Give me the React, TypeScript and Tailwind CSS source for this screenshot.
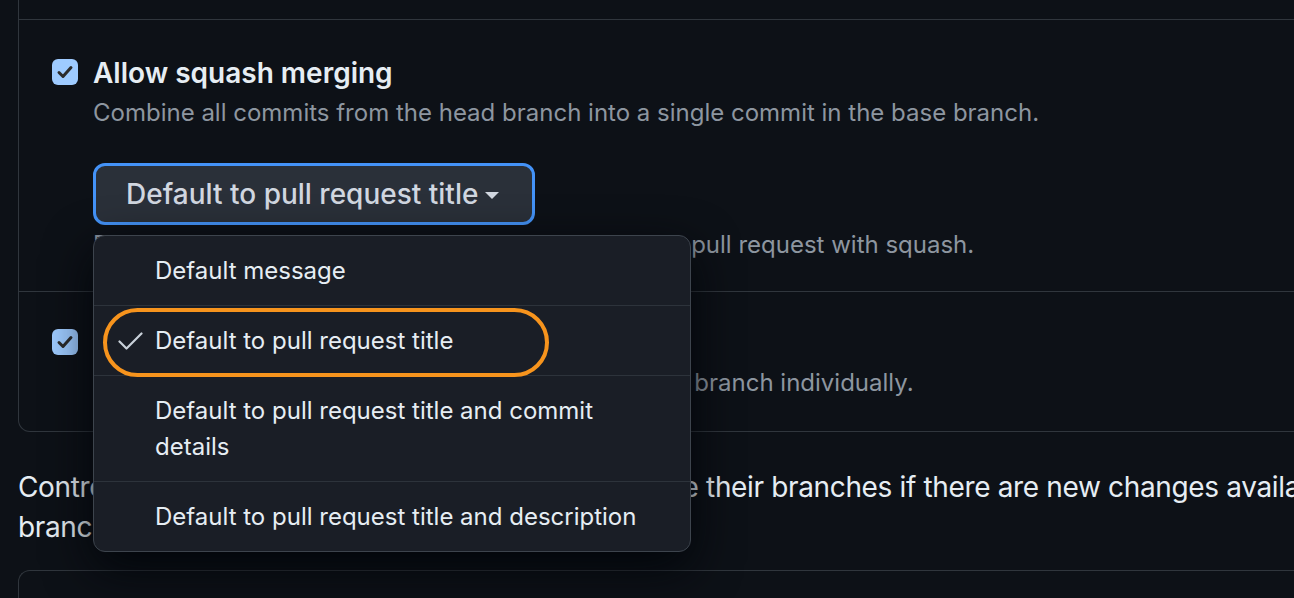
import React from "react";

function CheckBox() {
  return (
    <div className="w-[26px] h-[26px] shrink-0 rounded-[6px] bg-[#9ecbff] flex items-center justify-center">
      <svg width="18" height="18" viewBox="0 0 18 18">
        <path d="M3 9.5 L7 13.5 L15 4.5" fill="none" stroke="#2b2b2b" strokeWidth="3" strokeLinecap="round" strokeLinejoin="round" />
      </svg>
    </div>
  );
}

function MenuItem({ children, checked, last }: { children: React.ReactNode; checked?: boolean; last?: boolean }) {
  return (
    <div className={"flex pl-[24px] pr-[32px] pt-[17px] pb-[16px] " + (last ? "" : "border-b border-[#2d333b]")}>
      <div className="w-[37px] shrink-0 h-[36px] flex items-center">
        {checked && (
          <svg width="25" height="20" viewBox="0 0 25 20">
            <path d="M1.5 10.5 L8.5 17.5 L23.5 2.5" fill="none" stroke="#c9d1d9" strokeWidth="2.2" strokeLinecap="round" strokeLinejoin="round" />
          </svg>
        )}
      </div>
      <div className="text-[24px] leading-[36px] text-[#e6edf3]">{children}</div>
    </div>
  );
}

export default function App() {
  return (
    <div
      className="w-[1294px] h-[598px] overflow-hidden bg-[#0d1117] relative"
      style={{ fontFamily: 'Inter, "Noto Sans", "Liberation Sans", sans-serif' }}
    >
      <div className="pl-[18px]">
        <div className="w-[1400px] border-x border-b border-[#30363d] rounded-b-[12px]">
          <div className="h-[20px] border-b border-[#30363d]" />
          <div className="pl-[33px] pt-[32px] pb-[28px] border-b border-[#30363d] flex gap-[15px]">
            <div className="pt-[7px]">
              <CheckBox />
            </div>
            <div>
              <div className="pt-[1px] text-[28px] leading-[40px] font-semibold text-[#e6edf3]">Allow squash merging</div>
              <div className="mt-[2px] text-[24px] leading-[36px] text-[#8d96a0]">
                Combine all commits from the head branch into a single commit in the base branch.
              </div>
              <div className="relative mt-[32px] inline-block">
                <div className="h-[62px] flex items-center gap-[7px] pl-[30px] pr-[33px] rounded-[12px] border-[3px] border-[#4493f8] bg-[#2a3039]">
                  <span className="text-[28px] leading-[40px] font-medium text-[#d1d7e0]">Default to pull request title</span>
                  <svg width="14" height="8" viewBox="0 0 14 8" className="mt-[3px]">
                    <path d="M0 0 L14 0 L7 7 Z" fill="#d1d7e0" />
                  </svg>
                </div>
                <div className="absolute left-0 top-[72px] z-10 w-[598px] rounded-[12px] border border-[#3d444d] bg-[#1a1e26] shadow-[0_16px_48px_rgba(1,4,9,0.9)]">
                  <MenuItem>Default message</MenuItem>
                  <MenuItem checked>Default to pull request title</MenuItem>
                  <MenuItem>Default to pull request title and commit details</MenuItem>
                  <MenuItem last>Default to pull request title and description</MenuItem>
                  <div className="absolute left-[9px] top-[72px] w-[446px] h-[69px] rounded-full border-[4px] border-[#f7941d]" />
                </div>
              </div>
              <div className="mt-[2px] text-[24px] leading-[36px] text-[#8d96a0]">
                Default commit message presented when merging a pull request with squash.
              </div>
            </div>
          </div>
          <div className="pl-[33px] pt-[30px] pb-[30px] flex gap-[15px]">
            <div className="pt-[7px]">
              <CheckBox />
            </div>
            <div>
              <div className="pt-[1px] text-[28px] leading-[40px] font-semibold text-[#e6edf3]">Allow rebase merging</div>
              <div className="mt-[2px] text-[24px] leading-[36px] text-[#8d96a0]">
                Add all commits from the head branch onto the base branch individually.
              </div>
            </div>
          </div>
        </div>
        <div className="mt-[35px] text-[28px] leading-[40px] tracking-[-0.35px] text-[#e6edf3] whitespace-nowrap">
          <div>Control how and when users are prompted to update their branches if there are new changes available in the base</div>
          <div>branch.</div>
        </div>
        <div className="mt-[23px] w-[1400px] h-[100px] border-t border-l border-[#30363d] rounded-tl-[12px]" />
      </div>
    </div>
  );
}
